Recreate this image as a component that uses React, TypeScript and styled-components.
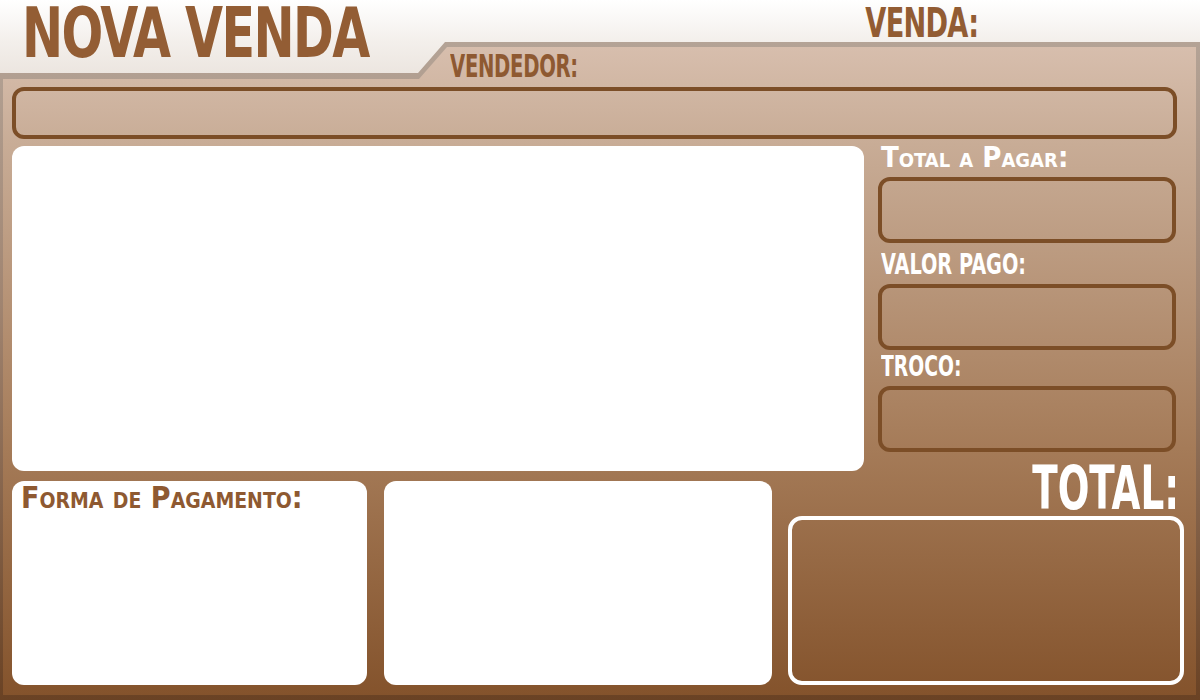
import React from "react";
import styled, { createGlobalStyle } from "styled-components";

const Global = createGlobalStyle`
  html, body { margin: 0; padding: 0; background: #ffffff; }
  * { box-sizing: border-box; }
`;

const FONT = `"Liberation Sans Narrow", "DejaVu Sans Condensed", "DejaVu Sans", sans-serif`;

const Page = styled.div`
  width: 1200px;
  height: 700px;
  display: flex;
  flex-direction: column;
  overflow: hidden;
  font-family: ${FONT};
  font-stretch: condensed;
  font-weight: 700;
  background: linear-gradient(#ffffff 0px, #f3efeb 42px, #ebe4de 78px);
`;

const TopBar = styled.header`
  height: 73px;
  flex: none;
  display: flex;
  align-items: flex-start;
  justify-content: space-between;
  padding: 0 222px 0 22px;
`;

/* condensed display text: the reference uses a very narrow typeface */
const Narrow = styled.span<{ $sx: number; $origin?: string }>`
  display: inline-block;
  transform: scaleX(${(p) => p.$sx});
  transform-origin: ${(p) => p.$origin ?? "left"} center;
  white-space: nowrap;
`;

const Title = styled.h1`
  margin: 0;
  font-size: 70px;
  line-height: 66px;
  letter-spacing: -2px;
  color: #935d34;
  white-space: nowrap;
`;

const SaleLabel = styled.div`
  font-size: 41px;
  line-height: 46px;
  letter-spacing: -1px;
  color: #925c33;
`;

const Frame = styled.section`
  flex: 1;
  margin-top: -31px;
  display: flex;
  padding: 5px 4px 5px 3px;
  background: linear-gradient(#b4a396 0%, #a08470 40%, #6a4224 100%);
  clip-path: polygon(0 31px, 418px 31px, 445px 0, 100% 0, 100% 100%, 0 100%);
`;

const Body = styled.div`
  flex: 1;
  display: flex;
  flex-direction: column;
  padding: 0 0 0 9px;
  background: linear-gradient(#d7bead 0%, #c8ac96 15%, #a57b58 62%, #84532c 100%);
  clip-path: polygon(0 32px, 416px 32px, 444px 0, 100% 0, 100% 100%, 0 100%);
`;

const SellerLabel = styled.div`
  margin-left: 438px;
  height: 40px;
  padding-top: 2px;
  font-size: 32px;
  line-height: 34px;
  letter-spacing: -0.5px;
  color: #8e5931;
`;

const Field = styled.div<{ $w: number; $h: number }>`
  width: ${(p) => p.$w}px;
  height: ${(p) => p.$h}px;
  border: 4px solid #7c4e27;
  border-radius: 12px;
  flex: none;
`;

const MiddleRow = styled.div`
  display: flex;
  margin-top: 7px;
  height: 325px;
`;

const WhitePanel = styled.div<{ $w: number }>`
  width: ${(p) => p.$w}px;
  height: 100%;
  flex: none;
  background: #ffffff;
  border-radius: 12px;
  padding: 0 9px;
`;

const SideColumn = styled.div`
  margin-left: 14px;
  width: 298px;
  display: flex;
  flex-direction: column;
`;

const SideLabel = styled.div<{ $caps?: boolean }>`
  height: 31px;
  flex: none;
  font-size: 29px;
  line-height: 22px;
  color: #ffffff;
  font-variant: ${(p) => (p.$caps ? "small-caps" : "normal")};
  padding-left: 3px;
  white-space: nowrap;
`;

const BottomRow = styled.div`
  display: flex;
  gap: 17px;
  margin-top: 10px;
  height: 204px;
`;

const PayTitle = styled.div`
  padding-top: 2px;
  font-size: 30px;
  line-height: 30px;
  color: #8e5931;
  font-variant: small-caps;
  white-space: nowrap;
`;

const TotalArea = styled.div`
  margin-left: -1px;
  margin-top: -20px;
  width: 396px;
  flex: none;
  display: flex;
  flex-direction: column;
  align-items: flex-end;
`;

const TotalLabel = styled.div`
  height: 55px;
  padding-right: 5px;
  font-size: 61px;
  line-height: 54px;
  color: #ffffff;
`;

const TotalBox = styled.div`
  width: 396px;
  height: 171px;
  border: 4px solid #ffffff;
  border-radius: 14px;
`;

const Spacer = styled.div<{ $h: number }>`
  height: ${(p) => p.$h}px;
  flex: none;
`;

export default function App() {
  return (
    <>
      <Global />
      <Page>
        <TopBar>
          <Title>
            <Narrow $sx={0.78}>NOVA VENDA</Narrow>
          </Title>
          <SaleLabel>
            <Narrow $sx={0.737} $origin="right">VENDA:</Narrow>
          </SaleLabel>
        </TopBar>
        <Frame>
          <Body>
            <SellerLabel>
              <Narrow $sx={0.683}>VENDEDOR:</Narrow>
            </SellerLabel>
            <Field $w={1165} $h={52} />
            <MiddleRow>
              <WhitePanel $w={852} />
              <SideColumn>
                <SideLabel $caps>Total a Pagar:</SideLabel>
                <Field $w={298} $h={66} />
                <Spacer $h={10} />
                <SideLabel>
                  <Narrow $sx={0.74}>VALOR PAGO:</Narrow>
                </SideLabel>
                <Field $w={298} $h={66} />
                <Spacer $h={5} />
                <SideLabel>
                  <Narrow $sx={0.72}>TROCO:</Narrow>
                </SideLabel>
                <Field $w={298} $h={66} />
              </SideColumn>
            </MiddleRow>
            <BottomRow>
              <WhitePanel $w={355}>
                <PayTitle>Forma de Pagamento:</PayTitle>
              </WhitePanel>
              <WhitePanel $w={388} />
              <TotalArea>
                <TotalLabel>
                  <Narrow $sx={0.68} $origin="right">TOTAL:</Narrow>
                </TotalLabel>
                <TotalBox />
              </TotalArea>
            </BottomRow>
          </Body>
        </Frame>
      </Page>
    </>
  );
}
